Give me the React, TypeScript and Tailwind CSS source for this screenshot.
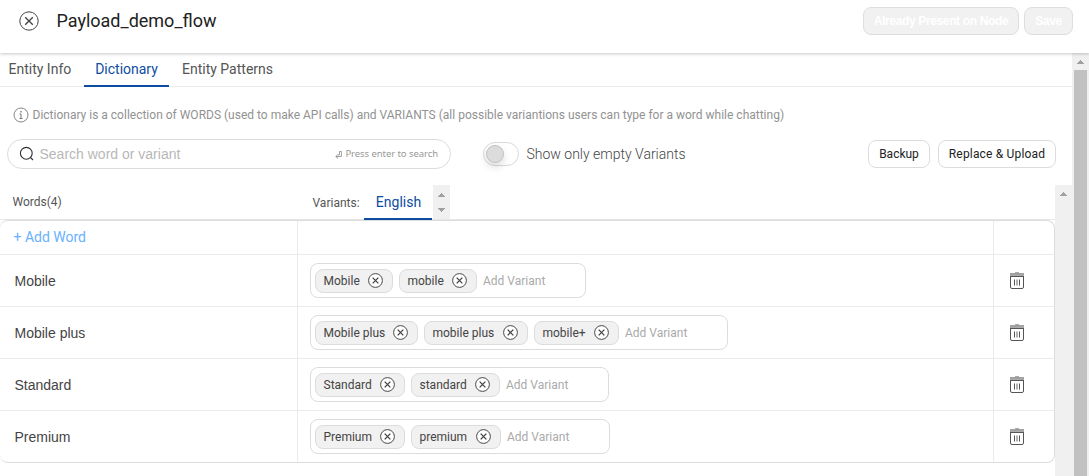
import React from "react";

const ROBOTO = "font-['Roboto',sans-serif]";
const ARIAL = "font-['Liberation_Sans',Arial,sans-serif]";

function CircleX({ size, sw = 1 }: { size: number; sw?: number }) {
  return (
    <svg width={size} height={size} viewBox="0 0 20 20" fill="none" stroke="#444" className="shrink-0">
      <circle cx="10" cy="10" r="9.2" fill="#fff" strokeWidth={sw} />
      <path d="M6.2 6.2l7.6 7.6M13.8 6.2l-7.6 7.6" strokeWidth={sw * 1.35} />
    </svg>
  );
}

function Trash() {
  return (
    <svg width="16" height="18" viewBox="0 0 16 18" fill="none" stroke="#555">
      <path d="M1.5 4.5v10.5q0 1.5 1.5 1.5h10q1.5 0 1.5-1.5V4.5" />
      <rect x="1" y="1.6" width="14" height="2.9" fill="#aaa" stroke="none" />
      <path d="M1 4.5h14" />
      <path d="M1 1.7h14" stroke="#777" strokeWidth="0.7" />
      <path d="M6 .8h4" stroke="#888" />
      <path d="M5.5 7.5v6M10.5 7.5v6" stroke="#555" />
      <path d="M8 7.5v6" stroke="#aaa" strokeWidth="1.8" />
    </svg>
  );
}

function Arrow({ down = false }: { down?: boolean }) {
  return (
    <svg width="7" height="4" viewBox="0 0 7 4" fill="#a0a0a0" shapeRendering="crispEdges">
      <path d={down ? "M0 0h7L3.5 4z" : "M0 4h7L3.5 0z"} />
    </svg>
  );
}

type Row = { word: string; box: string; chips: { t: string; w: string }[] };
const rows: Row[] = [
  { word: "Mobile", box: "w-[276px]", chips: [{ t: "Mobile", w: "w-[78px]" }, { t: "mobile", w: "w-[78px]" }] },
  {
    word: "Mobile plus",
    box: "w-[418px]",
    chips: [{ t: "Mobile plus", w: "w-[103px]" }, { t: "mobile plus", w: "w-[104px]" }, { t: "mobile+", w: "w-[85px]" }],
  },
  { word: "Standard", box: "w-[299px]", chips: [{ t: "Standard", w: "w-[90px]" }, { t: "standard", w: "w-[89px]" }] },
  { word: "Premium", box: "w-[300px]", chips: [{ t: "Premium", w: "w-[90px]" }, { t: "premium", w: "w-[90px]" }] },
];

export default function App() {
  return (
    <div className={`flex h-[476px] w-[1089px] flex-col overflow-hidden bg-white text-[#444] ${ROBOTO}`}>
      <header className="z-10 flex h-[53px] shrink-0 items-start bg-white pr-4 pl-[19px] shadow-[0_1px_3px_rgba(0,0,0,0.22)]">
        <div className="mt-[11px]"><CircleX size={20} /></div>
        <h1 className="mt-[9px] ml-[17.5px] text-[18px] leading-6 whitespace-nowrap text-[#222]">Payload_demo_flow</h1>
        <div className={`mt-[7px] ml-auto flex gap-[5px] text-[12px] font-bold tracking-[-0.36px] text-white ${ARIAL}`}>
          <button className="h-7 w-[156px] rounded-lg border border-[#dedede] bg-[#f1f1f1] whitespace-nowrap">Already Present on Node</button>
          <button className="h-7 w-[49px] rounded-lg border border-[#dedede] bg-[#f1f1f1]">Save</button>
        </div>
      </header>

      <div className="flex min-h-0 flex-1">
        <main className="flex w-[1072px] flex-col">
          <nav className="flex h-[34px] shrink-0 border-b border-[#ebebeb] text-[14px] leading-[33px] whitespace-nowrap text-[#555]">
            <span className="w-[84px] pl-[8.5px]">Entity Info</span>
            <span className="h-[34px] w-[85px] border-b-2 border-[#0d4da1] text-center text-[#0d4da1]">Dictionary</span>
            <span className="pl-[13px]">Entity Patterns</span>
          </nav>

          <div className="mt-[20px] flex h-4 shrink-0 items-center pl-[13px] text-[12px] whitespace-nowrap text-[#929292]">
            <svg width="16" height="16" viewBox="0 0 16 16" fill="none" stroke="#777">
              <circle cx="8" cy="8" r="7" strokeWidth="0.9" />
              <path d="M8 7v4.5M6.5 7H8M6.5 11.5h3" />
              <path d="M8 4v1.4" strokeWidth="1.4" />
            </svg>
            <span className="ml-[3.5px]">Dictionary is a collection of WORDS (used to make API calls) and VARIANTS (all possible variantions users can type for a word while chatting)</span>
          </div>

          <div className="mt-4 flex h-[30px] shrink-0 items-center pl-[7px]">
            <div className="flex h-[30px] w-[444px] items-center rounded-full border border-[#dcdcdc] pr-[12px] pl-[11px]">
              <svg width="16" height="16" viewBox="0 0 16 16" fill="none" stroke="#333" strokeWidth="1.1">
                <circle cx="7.3" cy="7.3" r="5.9" />
                <path d="M11.5 11.5l2.5 2.5" />
              </svg>
              <span className={`ml-[4.5px] text-[14px] whitespace-nowrap text-[#b8b8b8] ${ARIAL}`}>Search word or variant</span>
              <span className="mt-px ml-auto flex items-center gap-[3px] font-['Noto_Sans',sans-serif] whitespace-nowrap text-[#999]">
                <svg width="7" height="8" viewBox="0 0 7 8" fill="none" stroke="#888" strokeWidth="0.8">
                  <path d="M4.4 .5h2v5H1M3 3.5L.7 5.5 3 7.5M4.5 .5v3.3H3" />
                </svg>
                <span className="text-[9.5px] tracking-[-0.06px]">Press enter to search</span>
              </span>
            </div>
            <div className="ml-8 flex h-6 w-9 items-center rounded-full border border-[#d9d9d9] pl-[2px]">
              <div className="h-[18px] w-[18px] rounded-full border border-[#c2c2c2] bg-[#dcdcdc] shadow-[0_4px_8px_rgba(0,0,0,0.14)]" />
            </div>
            <span className="ml-[7.5px] text-[14px] font-light whitespace-nowrap text-[#444]">Show only empty Variants</span>
            <div className="mr-4 ml-auto flex gap-2 text-[12px] whitespace-nowrap text-[#222]">
              <button className="h-7 w-[62px] rounded-lg border border-[#dcdcdc] pb-px">Backup</button>
              <button className="h-7 w-[118px] rounded-lg border border-[#dcdcdc] pb-px tracking-[0.18px]">Replace &amp; Upload</button>
            </div>
          </div>

          <div className="mt-4 flex min-h-0 flex-1">
            <section className="flex w-[1055px] flex-col">
              <div className="flex h-[35px] shrink-0 border-b border-[#e6e6e6] text-[12px] whitespace-nowrap text-[#555]">
                <span className="w-[312.5px] pl-[12.5px] leading-[35px]">Words(4)</span>
                <span className="w-[51.5px] leading-[36px]">Variants:</span>
                <span className="h-[35px] w-[68px] border-b-2 border-[#0d4da1] pl-px text-center text-[14px] leading-[34px] text-[#0d4da1]">English</span>
                <span className="ml-px flex w-[17px] flex-col items-center justify-between bg-[#f0f0f0] pt-[8px] pb-[7px]">
                  <Arrow />
                  <Arrow down />
                </span>
              </div>
              <div className="h-[243px] shrink-0 overflow-hidden rounded-lg border border-l-0 border-[#dcdcdc]">
                <div className="flex h-[34px] border-b border-[#ebebeb]">
                  <div className="w-[298px] border-r border-[#ebebeb] pl-[13.5px] text-[14px] leading-[33px] text-[#69b1ff]">+ Add Word</div>
                  <div className="w-[696px] border-r border-[#ebebeb]" />
                </div>
                {rows.map((r) => (
                  <div key={r.word} className="flex h-[52px] border-b border-[#ebebeb] last:border-b-0">
                    <div className={`w-[298px] shrink-0 border-r border-[#ebebeb] pl-[14.5px] text-[14px] leading-[52px] text-[#444] ${ARIAL}`}>{r.word}</div>
                    <div className="w-[696px] shrink-0 border-r border-[#ebebeb] pt-2 pl-[12px]">
                      <div className={`flex h-[35px] items-center gap-[6px] rounded-lg border border-[#dcdcdc] pl-1 ${r.box}`}>
                        {r.chips.map((c) => (
                          <div key={c.t} className={`flex h-6 shrink-0 items-center justify-between rounded-lg border border-[#dcdcdc] bg-[#f1f1f1] pr-[9.5px] pl-[7.5px] text-[12px] whitespace-nowrap text-[#444] ${c.w}`}>
                            <span>{c.t}</span>
                            <CircleX size={15} sw={1.3} />
                          </div>
                        ))}
                        <span className="text-[12px] whitespace-nowrap text-[#aaa]">Add Variant</span>
                      </div>
                    </div>
                    <div className="pt-[17px] pl-[15px]"><Trash /></div>
                  </div>
                ))}
              </div>
            </section>
            <div className="flex w-[17px] justify-center bg-[#f0f0f0] pt-[7px]"><Arrow /></div>
          </div>
        </main>
        <div className="flex w-[17px] flex-col items-center bg-[#f0f0f0] pt-[7px]">
          <Arrow />
          <div className="mt-[6px] w-[13px] flex-1 bg-[#c1c1c1]" />
        </div>
      </div>
    </div>
  );
}
